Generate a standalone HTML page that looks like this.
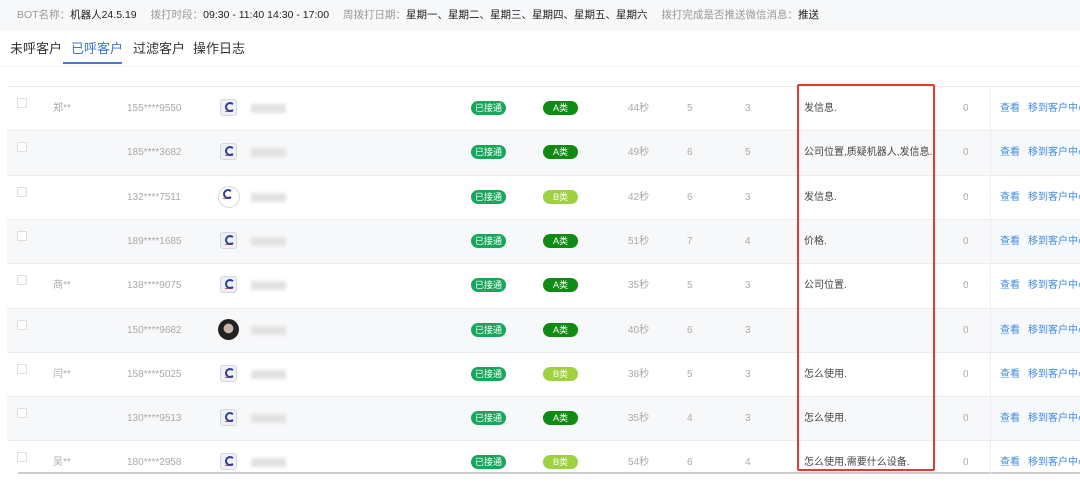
<!DOCTYPE html>
<html><head><meta charset="utf-8"><style>
*{margin:0;padding:0;box-sizing:border-box}
body{width:1080px;height:474px;overflow:hidden;background:#fff;font-family:"Liberation Sans","Noto Sans CJK SC",sans-serif;position:relative;color:#333}
.top{position:absolute;left:0;top:0;width:1080px;height:31px;background:#f7f8fa;font-size:10.5px;line-height:31px;padding-left:17px;white-space:nowrap}
.top .l{color:#999}.top .v{color:#222;margin-right:14px}
.tabs{position:absolute;top:38px;left:10px;font-size:13px;color:#333}
.tabs span{position:absolute;white-space:nowrap}
.ul{position:absolute;left:63px;top:62px;width:59px;height:2px;background:#4a78d8}
.row{position:absolute;left:7px;width:1073px;height:44.3px;border-top:1px solid #ececec;font-size:10px;color:#aaa}
.row.g{background:#f7f8fa}
.row>span{position:absolute;top:0;height:43px;line-height:43px;white-space:nowrap}
.row>i{position:absolute;display:block}
.cb{left:10px;top:11px;width:10px;height:10px;border:1px solid #ddd;background:#fff;border-radius:1px}
.row>span.pill{top:14px;height:14px;border-radius:7px;color:#fff;font-size:9px;line-height:14px;text-align:center}
.s{left:464px;width:35px;background:#17a75a}
.a{left:536px;width:35px;background:#0f8b14}
.b{left:536px;width:35px;background:#9fd03f}
.ic{left:213px;top:12px;width:17px;height:17px;border:1px solid #d6d6e0;border-radius:3px;background:#eef0f7}
.ic::after{content:"";position:absolute;left:4px;top:2px;width:6px;height:6px;border-radius:50%;border:2px solid #2b3f9a;border-right-color:transparent}
.ic::before{content:"";position:absolute;left:4px;top:11px;width:8px;height:1px;background:#d55}
.ic.c{border-radius:50%;background:#fff;width:22px;height:22px;left:211px;top:10px}
.ph{left:211px;top:10px;width:21px;height:21px;border-radius:50%;background:radial-gradient(circle at 50% 45%,#c9b4a8 0 30%,#222 32%)}
.blur{left:244px;top:17px;width:35px;height:9px;background:#e2e2e2;filter:blur(1.5px)}
.tx{color:#444}
.lk{color:#3f8be0}
.red{position:absolute;left:797px;top:84px;width:138px;height:387px;border:2px solid #e23a32;border-radius:2px}
.vl{position:absolute;left:990px;top:86px;width:1px;height:388px;background:#eee}
</style></head><body>
<div class="top"><span class="l">BOT名称：</span><span class="v">机器人24.5.19</span><span class="l">拨打时段：</span><span class="v">09:30 - 11:40 14:30 - 17:00</span><span class="l">周拨打日期：</span><span class="v">星期一、星期二、星期三、星期四、星期五、星期六</span><span class="l">拨打完成是否推送微信消息：</span><span class="v">推送</span></div>
<div class="tabs"><span style="left:0">未呼客户</span><span style="left:61px;color:#3f74d8">已呼客户</span><span style="left:123px">过滤客户</span><span style="left:183px">操作日志</span></div>
<div class="ul"></div>
<div style="position:absolute;left:0;top:66px;width:1080px;height:1px;background:#f3f3f3"></div>

<div class="row" style="top:86px"><i class="cb"></i><span style="left:46px">郑**</span><span style="left:120px">155****9550</span><i class="ic"></i><i class="blur"></i><span class="pill s">已接通</span><span class="pill a">A类</span><span style="left:621px">44秒</span><span style="left:680px">5</span><span style="left:738px">3</span><span class="tx" style="left:797px">发信息.</span><span style="left:956px">0</span><span class="lk" style="left:993px">查看</span><span class="lk" style="left:1021px">移到客户中心</span></div>
<div class="row g" style="top:130.3px"><i class="cb"></i><span style="left:120px">185****3682</span><i class="ic"></i><i class="blur"></i><span class="pill s">已接通</span><span class="pill a">A类</span><span style="left:621px">49秒</span><span style="left:680px">6</span><span style="left:738px">5</span><span class="tx" style="left:797px">公司位置,质疑机器人,发信息.</span><span style="left:956px">0</span><span class="lk" style="left:993px">查看</span><span class="lk" style="left:1021px">移到客户中心</span></div>
<div class="row" style="top:174.6px"><i class="cb"></i><span style="left:120px">132****7511</span><i class="ic c"></i><i class="blur"></i><span class="pill s">已接通</span><span class="pill b">B类</span><span style="left:621px">42秒</span><span style="left:680px">6</span><span style="left:738px">3</span><span class="tx" style="left:797px">发信息.</span><span style="left:956px">0</span><span class="lk" style="left:993px">查看</span><span class="lk" style="left:1021px">移到客户中心</span></div>
<div class="row g" style="top:218.9px"><i class="cb"></i><span style="left:120px">189****1685</span><i class="ic"></i><i class="blur"></i><span class="pill s">已接通</span><span class="pill a">A类</span><span style="left:621px">51秒</span><span style="left:680px">7</span><span style="left:738px">4</span><span class="tx" style="left:797px">价格.</span><span style="left:956px">0</span><span class="lk" style="left:993px">查看</span><span class="lk" style="left:1021px">移到客户中心</span></div>
<div class="row" style="top:263.2px"><i class="cb"></i><span style="left:46px">商**</span><span style="left:120px">138****9075</span><i class="ic"></i><i class="blur"></i><span class="pill s">已接通</span><span class="pill a">A类</span><span style="left:621px">35秒</span><span style="left:680px">5</span><span style="left:738px">3</span><span class="tx" style="left:797px">公司位置.</span><span style="left:956px">0</span><span class="lk" style="left:993px">查看</span><span class="lk" style="left:1021px">移到客户中心</span></div>
<div class="row g" style="top:307.5px"><i class="cb"></i><span style="left:120px">150****9682</span><i class="ph"></i><i class="blur"></i><span class="pill s">已接通</span><span class="pill a">A类</span><span style="left:621px">40秒</span><span style="left:680px">6</span><span style="left:738px">3</span><span style="left:956px">0</span><span class="lk" style="left:993px">查看</span><span class="lk" style="left:1021px">移到客户中心</span></div>
<div class="row" style="top:351.8px"><i class="cb"></i><span style="left:46px">闫**</span><span style="left:120px">158****5025</span><i class="ic"></i><i class="blur"></i><span class="pill s">已接通</span><span class="pill b">B类</span><span style="left:621px">38秒</span><span style="left:680px">5</span><span style="left:738px">3</span><span class="tx" style="left:797px">怎么使用.</span><span style="left:956px">0</span><span class="lk" style="left:993px">查看</span><span class="lk" style="left:1021px">移到客户中心</span></div>
<div class="row g" style="top:396.1px"><i class="cb"></i><span style="left:120px">130****9513</span><i class="ic"></i><i class="blur"></i><span class="pill s">已接通</span><span class="pill a">A类</span><span style="left:621px">35秒</span><span style="left:680px">4</span><span style="left:738px">3</span><span class="tx" style="left:797px">怎么使用.</span><span style="left:956px">0</span><span class="lk" style="left:993px">查看</span><span class="lk" style="left:1021px">移到客户中心</span></div>
<div class="row" style="top:440.4px"><i class="cb"></i><span style="left:46px">吴**</span><span style="left:120px">180****2958</span><i class="ic"></i><i class="blur"></i><span class="pill s">已接通</span><span class="pill b">B类</span><span style="left:621px">54秒</span><span style="left:680px">6</span><span style="left:738px">4</span><span class="tx" style="left:797px">怎么使用,需要什么设备.</span><span style="left:956px">0</span><span class="lk" style="left:993px">查看</span><span class="lk" style="left:1021px">移到客户中心</span></div>
<div style="position:absolute;left:18px;top:472px;width:1062px;height:2px;background:#ccc"></div>
<div class="vl"></div>
<div class="red"></div>
</body></html>
